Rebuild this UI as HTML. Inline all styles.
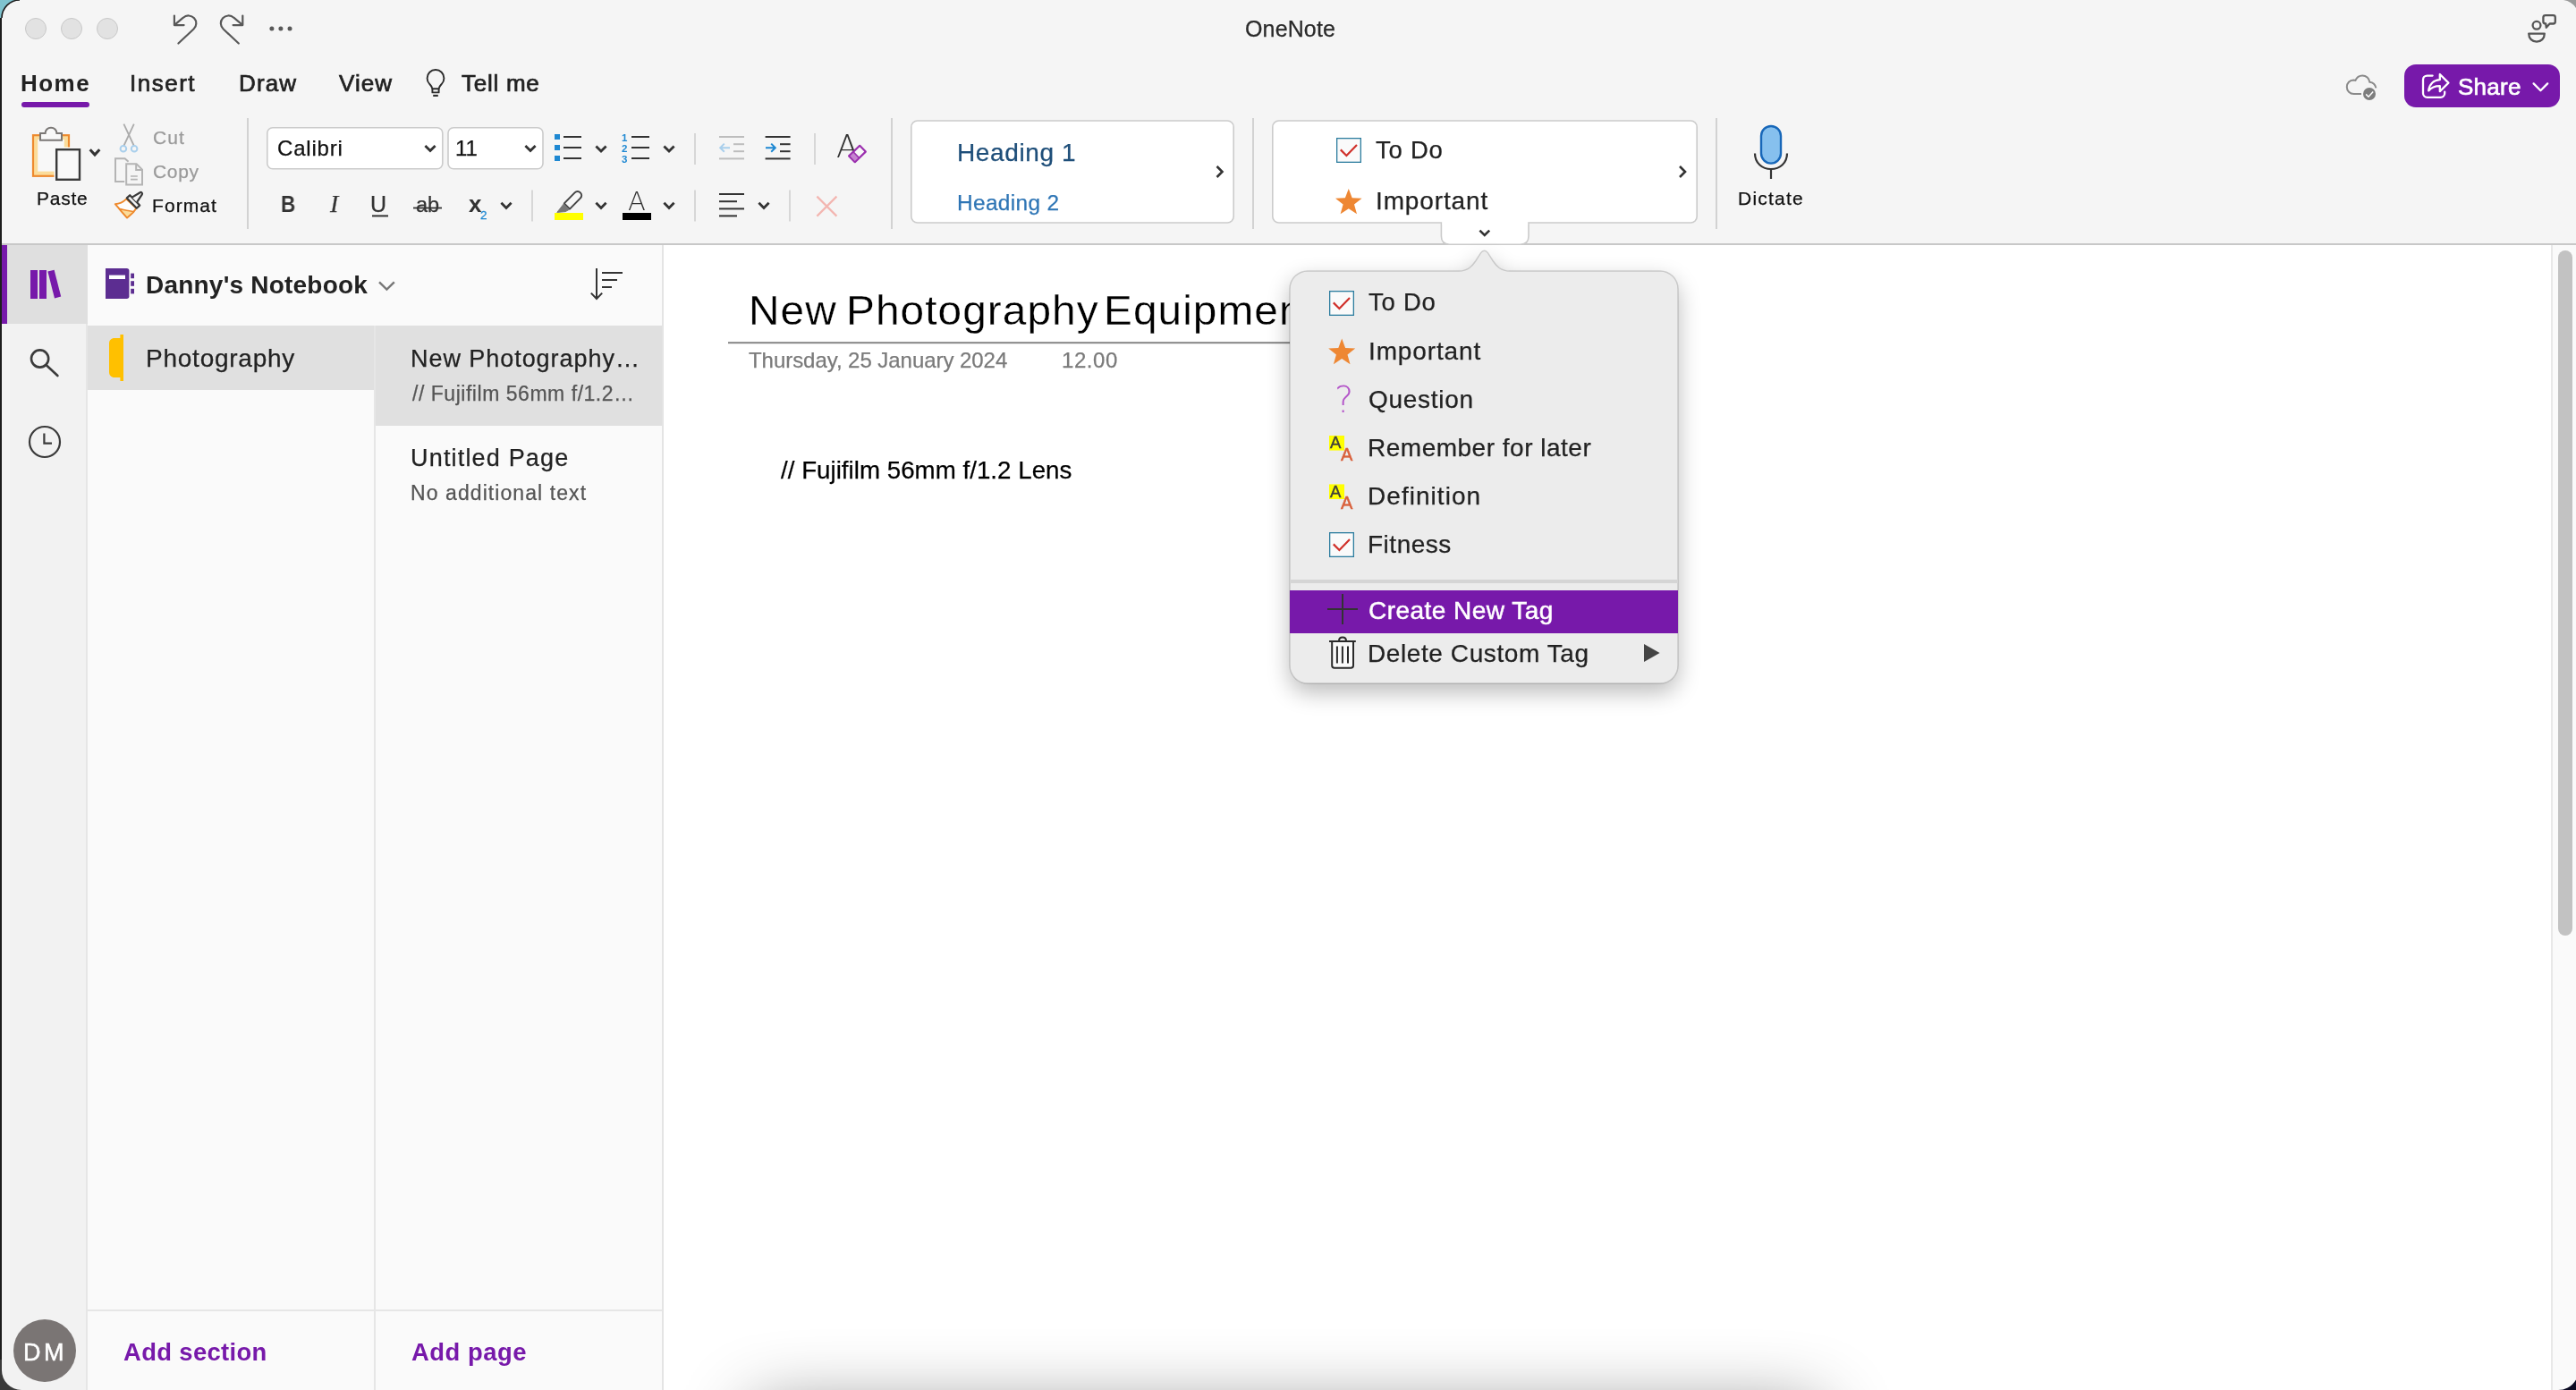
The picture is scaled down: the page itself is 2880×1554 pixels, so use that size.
<!DOCTYPE html>
<html lang="en"><head><meta charset="utf-8"><title>OneNote</title>
<style>
html,body{margin:0;padding:0;}
body{width:2880px;height:1554px;overflow:hidden;background:#f5f5f5;position:relative;font-family:"Liberation Sans",sans-serif;}
.t{position:absolute;line-height:0;white-space:nowrap;will-change:transform;}
.r{position:absolute;}
svg{position:absolute;left:0;top:0;overflow:visible;}
</style></head><body>
<div class="r" style="left:0px;top:272px;width:2880px;height:2px;background:#c8c8c8;"></div>
<div class="r" style="left:2px;top:274px;width:94px;height:1280px;background:#f2f2f2;"></div>
<div class="r" style="left:96px;top:274px;width:2px;height:1280px;background:#e6e6e6;"></div>
<div class="r" style="left:98px;top:274px;width:642px;height:1280px;background:#fafafa;"></div>
<div class="r" style="left:740px;top:274px;width:2px;height:1280px;background:#e4e4e4;"></div>
<div class="r" style="left:742px;top:274px;width:2138px;height:1280px;background:#ffffff;"></div>
<div class="r" style="left:2852px;top:274px;width:2px;height:1280px;background:#e8e8e8;"></div>
<div class="r" style="left:2854px;top:274px;width:26px;height:1280px;background:#fafafa;"></div>
<div class="r" style="left:2860px;top:280px;width:16px;height:766px;background:#c2c2c2;border-radius:8px;"></div>
<div class="r" style="left:742px;top:1254px;width:2109px;height:300px;overflow:hidden;"><div style="position:absolute;left:100px;top:320px;width:1193px;height:120px;box-shadow:0 0 80px 0 rgba(0,0,0,0.45);background:rgba(0,0,0,0.45);"></div></div>
<svg width="2880" height="1554" viewBox="0 0 2880 1554"><circle cx="40" cy="32" r="11.5" fill="#e2e2e2" stroke="#c8c8c8" stroke-width="1"/><circle cx="80" cy="32" r="11.5" fill="#e2e2e2" stroke="#c8c8c8" stroke-width="1"/><circle cx="120" cy="32" r="11.5" fill="#e2e2e2" stroke="#c8c8c8" stroke-width="1"/><g transform="translate(0,1.1)" fill="none" stroke="#585858" stroke-width="2.2" stroke-linecap="round" stroke-linejoin="round"><path d="M194.9 16.4V27H205.6"/><path d="M195.4 26.6L204.9 18.6A8.6 8.6 0 0 1 217.06 19.2A8.6 8.6 0 0 1 216.5 31.4L199.4 47.4"/><path d="M271.3 16.4V27H260.6"/><path d="M270.8 26.6L261.3 18.6A8.6 8.6 0 0 0 249.14 19.2A8.6 8.6 0 0 0 249.7 31.4L266.8 47.4"/></g><circle cx="303.9" cy="32" r="2.5" fill="#585858"/><circle cx="313.9" cy="32" r="2.5" fill="#585858"/><circle cx="324.0" cy="32" r="2.5" fill="#585858"/><g fill="none" stroke="#555" stroke-width="2.3" stroke-linejoin="round" stroke-linecap="round"><circle cx="2836" cy="28.3" r="4.4"/><path d="M2827.2 37.6H2844.8C2844.8 43 2841 46.6 2836 46.6C2831 46.6 2827.2 43 2827.2 37.6Z"/><path d="M2846 17.2H2854.5C2856 17.2 2856.8 18 2856.8 19.5V24.2C2856.8 25.7 2856 26.5 2854.5 26.5H2850.6L2846.8 30.8L2846.2 26.5C2844.4 26.5 2843.4 25.7 2843.4 24.2V19.5C2843.4 18 2844.4 17.2 2846 17.2Z"/></g><rect x="24" y="114" width="76" height="6" rx="3" fill="#7719aa"/><g fill="none" stroke="#2b2b2b" stroke-width="1.9" stroke-linejoin="round"><path d="M483.4 99.2C483.2 97 481.8 95.6 480.35 94.05A9.4 9.4 0 1 1 493.65 94.05C492.2 95.6 490.8 97 490.6 99.2Z"/><path d="M483.4 99.2V103.4H490.6V99.2"/><path d="M484.2 106.9H489.8" stroke-width="2.1"/></g><g><path d="M2640 105H2631.6C2627.2 105 2623.8 101.6 2623.8 97.2C2623.8 93 2627 89.6 2631.2 89.4L2633.4 89.8C2634.8 86.4 2637.8 84.4 2641.2 84.4C2645.4 84.4 2648.8 87.6 2649.4 91.8C2653 92.2 2655.6 94.8 2656.4 98.4" fill="none" stroke="#8a8a8a" stroke-width="2"/><circle cx="2649" cy="105" r="7" fill="#7d7d7d"/><path d="M2645.2 105.4L2648 108.2L2653.2 102.6" fill="none" stroke="#fff" stroke-width="1.5"/></g><rect x="2688" y="72" width="174" height="48" rx="13" fill="#7719aa"/><g fill="none" stroke="#fff" stroke-width="2.3" stroke-linejoin="round" stroke-linecap="round"><path d="M2719.6 84.6H2713.6C2711 84.6 2709 86.6 2709 89.2V104.2C2709 106.8 2711 108.8 2713.6 108.8H2728.6C2731.2 108.8 2733.2 106.8 2733.2 104.2V102.6"/><path d="M2727.8 83V89.2C2720.6 89.6 2716 94.2 2715.2 101.4C2718.2 97.8 2722.2 96.2 2727.8 96.2V102.2L2737.4 92.6Z"/><path d="M2832.6 93.4L2840.4 101.2L2848.2 93.4"/></g><g><rect x="37" y="151.2" width="40" height="45.6" fill="#fbdc9a" stroke="#ee8a2e" stroke-width="2.2"/><rect x="42.2" y="156" width="29.6" height="35.6" fill="#f8f8f8"/><path d="M45 156.8V149H50.6C50.6 145.4 53.4 142.8 57 142.8C60.6 142.8 63.4 145.4 63.4 149H69V156.8Z" fill="#f8f8f8" stroke="#7a7775" stroke-width="2"/><rect x="60.5" y="164.5" width="31" height="39" fill="#f5f5f5"/><rect x="63.2" y="167.2" width="25.8" height="33.6" fill="#f9f9f9" stroke="#3a3a3a" stroke-width="2.4"/></g><path d="M100.7 167.3L106.0 173.0L111.3 167.3" fill="none" stroke="#333" stroke-width="3.1" stroke-linejoin="miter"/><g fill="none"><path d="M138.4 138.6L149.8 163M149.8 138.6L138.4 163" stroke="#acacac" stroke-width="1.8"/><circle cx="137.9" cy="166.2" r="3.3" stroke="#a9cfec" stroke-width="2"/><circle cx="150.1" cy="166.2" r="3.3" stroke="#a9cfec" stroke-width="2"/></g><g fill="none" stroke="#b4b4b4" stroke-width="2"><path d="M139.2 203H129V177.2H139.6L143.6 180.8"/><path d="M141.2 183.2H152.6L159 189.6V206.6H141.2Z" fill="#f5f5f5"/><path d="M152.2 183.6V190H158.6"/><path d="M146 197H153.8M146 200.6H153.8" stroke-width="1.6"/></g><g stroke-linejoin="round"><path d="M141.4 222.4C137 226.6 133 228 128.8 228.2L142 243.4C146.4 240 150 236.6 152.4 232.8Z" fill="#fdfdfd" stroke="#ee8a2e" stroke-width="2"/><path d="M133.4 233.6C138.6 234.6 144 235.4 149.6 236.8L142 243.4Z" fill="#fbdc9a" stroke="#ee8a2e" stroke-width="1.6"/><path d="M141.8 221.4L145.2 218.2L156.2 229.6L152.8 232.8Z" fill="#f5f5f5" stroke="#3a3a3a" stroke-width="2.2"/><path d="M147.6 220.6L156.6 215.2C158 214.4 159.6 216 158.8 217.4L153 226.2" fill="#f5f5f5" stroke="#3a3a3a" stroke-width="2.2"/></g><rect x="276" y="132" width="2" height="124" fill="#d2d2d2"/><rect x="298.8" y="142.8" width="196" height="46" rx="6" fill="#fff" stroke="#cbcbcb" stroke-width="1.6"/><rect x="501" y="142.8" width="106" height="46" rx="6" fill="#fff" stroke="#cbcbcb" stroke-width="1.6"/><path d="M475.4 163.0L481.0 168.6L486.6 163.0" fill="none" stroke="#333" stroke-width="2.8" stroke-linejoin="miter"/><path d="M587.4 163.0L593.0 168.6L598.6 163.0" fill="none" stroke="#333" stroke-width="2.8" stroke-linejoin="miter"/><rect x="620" y="150" width="6" height="6" fill="#1e88d2"/><rect x="630" y="152" width="20" height="2" fill="#333"/><rect x="706" y="152" width="20" height="2" fill="#333"/><rect x="620" y="162" width="6" height="6" fill="#1e88d2"/><rect x="630" y="164" width="20" height="2" fill="#333"/><rect x="706" y="164" width="20" height="2" fill="#333"/><rect x="620" y="174" width="6" height="6" fill="#1e88d2"/><rect x="630" y="176" width="20" height="2" fill="#333"/><rect x="706" y="176" width="20" height="2" fill="#333"/><path d="M666.4 163.4L672.0 169.0L677.6 163.4" fill="none" stroke="#333" stroke-width="2.8" stroke-linejoin="miter"/><path d="M742.4 163.4L748.0 169.0L753.6 163.4" fill="none" stroke="#333" stroke-width="2.8" stroke-linejoin="miter"/><rect x="776.2" y="149" width="1.6" height="35" fill="#d0d0d0"/><g fill="#bdbdbd"><rect x="804" y="152" width="28" height="2"/><rect x="820" y="160.2" width="12" height="2"/><rect x="820" y="168.2" width="12" height="2"/><rect x="804" y="176.4" width="28" height="2"/></g><path d="M816 165.2H805.4M809.8 160.6L805.2 165.2L809.8 169.8" fill="none" stroke="#a9cfec" stroke-width="2"/><g fill="#333"><rect x="855.6" y="152" width="28" height="2"/><rect x="872" y="160.2" width="11.6" height="2"/><rect x="872" y="168.2" width="11.6" height="2"/><rect x="855.6" y="176.4" width="28" height="2"/></g><path d="M856 165.2H866.6M862.2 160.6L866.8 165.2L862.2 169.8" fill="none" stroke="#1e88d2" stroke-width="2"/><rect x="910.2" y="149" width="1.6" height="35" fill="#d0d0d0"/><rect x="996" y="132" width="2" height="124" fill="#d2d2d2"/><rect x="1018.8" y="135" width="360.4" height="114" rx="7" fill="#fff" stroke="#cbcbcb" stroke-width="1.6"/><path d="M1360.5 186.0L1366.5 192.0L1360.5 198.0" fill="none" stroke="#333" stroke-width="2.6"/><rect x="1400" y="132" width="2" height="124" fill="#d2d2d2"/><path d="M1611.4 248H1709V264C1709 270 1705.8 273.2 1699.8 273.2H1620.6C1614.6 273.2 1611.4 270 1611.4 264Z" fill="#fff" stroke="#cbcbcb" stroke-width="1.6"/><rect x="1422.8" y="135" width="474.4" height="114" rx="7" fill="#fff" stroke="#cbcbcb" stroke-width="1.6"/><rect x="1612.2" y="246" width="96" height="5" fill="#fff"/><path d="M1878.0 186.0L1884.0 192.0L1878.0 198.0" fill="none" stroke="#333" stroke-width="2.6"/><path d="M1654.4 257.6L1659.8 262.9L1665.2 257.6" fill="none" stroke="#333" stroke-width="2.6" stroke-linejoin="miter"/><rect x="1918" y="132" width="2" height="124" fill="#d2d2d2"/><rect x="1494.65" y="154.65" width="26.7" height="26.7" fill="#fafafa" stroke="#2b7c9e" stroke-width="1.3"/><path d="M1498.8 167.4L1505.4 174L1517 162" fill="none" stroke="#d0302a" stroke-width="2.2"/><polygon points="1507.8,211.0 1511.7,221.3 1522.6,221.8 1514.0,228.6 1517.0,239.2 1507.8,233.2 1498.6,239.2 1501.6,228.6 1493.0,221.8 1503.9,221.3" fill="#ee8733"/><rect x="620" y="238" width="32" height="8" fill="#ffff00"/><g stroke-linejoin="round"><path d="M630.8 227.4L642.6 215.4C644.4 213.6 647 213.6 648.8 215.4C650.6 217.2 650.6 219.8 648.8 221.6L637 233.6Z" fill="#f7f7f7" stroke="#444" stroke-width="2"/><path d="M630.2 228L636.4 234.2L632.2 236.6L622.8 237.4Z" fill="#777" stroke="#777" stroke-width="1"/></g><path d="M666.4 226.8L672.0 232.4L677.6 226.8" fill="none" stroke="#333" stroke-width="2.8" stroke-linejoin="miter"/><rect x="696" y="238" width="32" height="8" fill="#000"/><path d="M742.4 226.8L748.0 232.4L753.6 226.8" fill="none" stroke="#333" stroke-width="2.8" stroke-linejoin="miter"/><rect x="776.2" y="212.5" width="1.6" height="35" fill="#d0d0d0"/><g fill="#333"><rect x="804" y="216" width="28" height="2"/><rect x="804" y="224.2" width="20" height="2"/><rect x="804" y="232.4" width="28" height="2"/><rect x="804" y="240.4" width="20" height="2"/></g><path d="M848.4 226.8L854.0 232.4L859.6 226.8" fill="none" stroke="#333" stroke-width="2.8" stroke-linejoin="miter"/><rect x="882.2" y="212.5" width="1.6" height="35" fill="#d0d0d0"/><path d="M913.4 219.6L935.4 241.6M935.4 219.6L913.4 241.6" stroke="#f3b6b1" stroke-width="2.2" fill="none"/><rect x="594.2" y="212.5" width="1.6" height="35" fill="#d0d0d0"/><path d="M560.4 226.8L566.0 232.4L571.6 226.8" fill="none" stroke="#333" stroke-width="2.8" stroke-linejoin="miter"/><rect x="416" y="240.4" width="18" height="2" fill="#333"/><rect x="462" y="231.6" width="32" height="1.8" fill="#333"/><rect x="1969" y="141" width="22" height="41.6" rx="11" fill="#86c0ee" stroke="#1767b9" stroke-width="2.4"/><path d="M1962 171.4C1962 182 1970 189 1980 189C1990 189 1998 182 1998 171.4M1980 189V200" fill="none" stroke="#333" stroke-width="2.2"/></svg>
<div class="t " style="left:1391.62px;top:32.34px;font-size:25.00px;color:#2a2a2a;letter-spacing:0.139px;-webkit-text-stroke:0.25px #2a2a2a;">OneNote</div>
<div class="t " style="left:23.26px;top:92.99px;font-size:26.00px;color:#222;font-weight:700;letter-spacing:1.464px;">Home</div>
<div class="t " style="left:144.60px;top:92.99px;font-size:26.00px;color:#222;letter-spacing:1.513px;-webkit-text-stroke:0.7px #222;">Insert</div>
<div class="t " style="left:266.87px;top:92.99px;font-size:26.00px;color:#222;letter-spacing:1.133px;-webkit-text-stroke:0.7px #222;">Draw</div>
<div class="t " style="left:378.89px;top:92.99px;font-size:26.00px;color:#222;letter-spacing:1.055px;-webkit-text-stroke:0.7px #222;">View</div>
<div class="t " style="left:516.42px;top:92.99px;font-size:26.00px;color:#222;letter-spacing:0.731px;-webkit-text-stroke:0.7px #222;">Tell me</div>
<div class="t " style="left:2747.62px;top:96.99px;font-size:26.00px;color:#fff;letter-spacing:0.239px;-webkit-text-stroke:0.7px #fff;">Share</div>
<div class="t " style="left:41.28px;top:222.22px;font-size:21.00px;color:#111;letter-spacing:0.739px;-webkit-text-stroke:0.25px #111;">Paste</div>
<div class="t " style="left:170.93px;top:153.72px;font-size:21.00px;color:#9a9a9a;letter-spacing:1.020px;-webkit-text-stroke:0.25px #9a9a9a;">Cut</div>
<div class="t " style="left:170.93px;top:191.72px;font-size:21.00px;color:#9a9a9a;letter-spacing:0.694px;-webkit-text-stroke:0.25px #9a9a9a;">Copy</div>
<div class="t " style="left:170.28px;top:229.72px;font-size:21.00px;color:#111;letter-spacing:1.074px;-webkit-text-stroke:0.25px #111;">Format</div>
<div class="t " style="left:309.78px;top:165.68px;font-size:24.00px;color:#111;letter-spacing:0.803px;-webkit-text-stroke:0.25px #111;">Calibri</div>
<div class="t " style="left:509.17px;top:165.68px;font-size:24.00px;color:#111;-webkit-text-stroke:0.25px #111;">11</div>
<div class="t " style="left:314.09px;top:228.34px;font-size:25.00px;color:#333;font-weight:700;transform:scaleX(0.9000);transform-origin:0 50%;">B</div>
<div class="t " style="left:369.00px;top:227.55px;font-size:28.00px;color:#333;font-style:italic;-webkit-text-stroke:0.25px #333;font-family:'Liberation Serif',serif;">I</div>
<div class="t " style="left:414.07px;top:228.34px;font-size:25.00px;color:#333;-webkit-text-stroke:0.25px #333;">U</div>
<div class="t " style="left:464.50px;top:228.86px;font-size:23.50px;color:#333;-webkit-text-stroke:0.25px #333;">ab</div>
<div class="t " style="left:523.82px;top:227.99px;font-size:26.00px;color:#333;font-weight:700;">x</div>
<div class="t " style="left:536.72px;top:240.92px;font-size:13.50px;color:#1e88d2;-webkit-text-stroke:0.3px #1e88d2;">2</div>
<div class="t " style="left:695.00px;top:154.42px;font-size:11.50px;color:#1e88d2;font-weight:700;">1</div>
<div class="t " style="left:695.00px;top:166.42px;font-size:11.50px;color:#1e88d2;font-weight:700;">2</div>
<div class="t " style="left:695.00px;top:178.32px;font-size:11.50px;color:#1e88d2;font-weight:700;">3</div>
<div class="t " style="left:935.40px;top:163.66px;font-size:35.60px;color:#333;font-family:'DejaVu Sans',sans-serif;font-weight:200;">A</div>
<div class="t " style="left:702.20px;top:225.45px;font-size:29.00px;color:#333;font-family:'DejaVu Sans',sans-serif;font-weight:200;">A</div>
<div class="t " style="left:1069.70px;top:170.80px;font-size:28.00px;color:#1e4e79;letter-spacing:0.626px;-webkit-text-stroke:0.25px #1e4e79;">Heading 1</div>
<div class="t " style="left:1070.00px;top:226.55px;font-size:24.40px;color:#2e75b5;letter-spacing:0.373px;-webkit-text-stroke:0.25px #2e75b5;">Heading 2</div>
<div class="t " style="left:1538.38px;top:168.47px;font-size:27.50px;color:#222;letter-spacing:0.733px;-webkit-text-stroke:0.25px #222;">To Do</div>
<div class="t " style="left:1537.92px;top:225.30px;font-size:28.00px;color:#222;letter-spacing:0.877px;-webkit-text-stroke:0.25px #222;">Important</div>
<div class="t " style="left:1943.28px;top:222.22px;font-size:21.00px;color:#111;letter-spacing:1.216px;-webkit-text-stroke:0.25px #111;">Dictate</div>
<svg width="2880" height="1554" viewBox="0 0 2880 1554"><path d="M949.2 174.4L961.2 162.8L967.8 169.6L955.8 181.2Z" fill="#f8f8f8" stroke="#9b2fae" stroke-width="2.2" stroke-linejoin="round"/><path d="M949.2 174.4L954 169.8L960.6 176.6L955.8 181.2Z" fill="#c583d0" stroke="#9b2fae" stroke-width="1.6" stroke-linejoin="round"/></svg>
<div class="r" style="left:2px;top:274px;width:6px;height:88px;background:#7719aa;"></div>
<div class="r" style="left:8px;top:274px;width:90px;height:88px;background:#dfdfdf;"></div>
<div class="r" style="left:98px;top:364px;width:320px;height:72px;background:#e0e0e0;"></div>
<div class="r" style="left:418px;top:364px;width:2px;height:1190px;background:#e6e6e6;"></div>
<div class="r" style="left:420px;top:364px;width:320px;height:112px;background:#e0e0e0;"></div>
<div class="r" style="left:98px;top:1464px;width:642px;height:2px;background:#e6e6e6;"></div>
<svg width="2880" height="1554" viewBox="0 0 2880 1554"><g fill="#7719aa"><rect x="34" y="302" width="8" height="32"/><rect x="44" y="302" width="8" height="32"/><path d="M53.4 303.6L60.6 301.8L68.2 331.6L61 333.6Z"/></g><g fill="none" stroke="#3b3b3b" stroke-width="2.6" stroke-linecap="round"><circle cx="44.6" cy="401" r="9.6"/><path d="M51.8 408.2L64.4 420"/></g><g fill="none" stroke="#3b3b3b" stroke-width="2.2"><circle cx="50" cy="494" r="17"/><path d="M49.4 484.6V495.6H58"/></g><circle cx="50" cy="1510" r="35" fill="#7a7574"/><g fill="#5c2d91"><path d="M118 300H141.6C143.4 300 144.4 301 144.4 302.8V331.2C144.4 333 143.4 334 141.6 334H118Z"/><rect x="146.2" y="305.6" width="3.8" height="5.6"/><rect x="146.2" y="314.2" width="3.8" height="5.6"/><rect x="146.2" y="322.8" width="3.8" height="5.6"/></g><rect x="122" y="307.6" width="18" height="4.4" fill="#fff"/><path d="M424 315.4L432.4 323.6L440.8 315.4" fill="none" stroke="#777" stroke-width="2.4"/><g fill="none" stroke="#333" stroke-width="2"><path d="M667 300V334M660.8 327.6L667 334L673.2 327.6"/><path d="M673 305H696M673 313H690M673 321H684"/></g><path d="M138 374V426H134.4V422H128C124.4 422 122 419.6 122 416V384C122 380.4 124.4 378 128 378H134.4V374Z" fill="#ffc000"/><rect x="814" y="382.2" width="660" height="2" fill="#858585"/></svg>
<div class="t " style="left:26.39px;top:1511.64px;font-size:27.00px;color:#fff;letter-spacing:3.440px;-webkit-text-stroke:0.5px #fff;">DM</div>
<div class="t " style="left:163.13px;top:319.00px;font-size:28.00px;color:#222;font-weight:700;letter-spacing:0.211px;">Danny's Notebook</div>
<div class="t " style="left:162.70px;top:401.30px;font-size:28.00px;color:#222;letter-spacing:0.757px;-webkit-text-stroke:0.25px #222;">Photography</div>
<div class="t " style="left:458.79px;top:400.64px;font-size:27.00px;color:#222;letter-spacing:0.950px;-webkit-text-stroke:0.25px #222;">New Photography…</div>
<div class="t " style="left:461.00px;top:440.03px;font-size:23.00px;color:#555;letter-spacing:0.531px;-webkit-text-stroke:0.25px #555;">// Fujifilm 56mm f/1.2…</div>
<div class="t " style="left:458.92px;top:511.84px;font-size:27.00px;color:#222;letter-spacing:1.181px;-webkit-text-stroke:0.25px #222;">Untitled Page</div>
<div class="t " style="left:459.11px;top:551.03px;font-size:23.00px;color:#555;letter-spacing:1.078px;-webkit-text-stroke:0.25px #555;">No additional text</div>
<div class="t " style="left:138.32px;top:1511.51px;font-size:27.40px;color:#7719aa;font-weight:700;letter-spacing:0.358px;">Add section</div>
<div class="t " style="left:459.82px;top:1511.51px;font-size:27.40px;color:#7719aa;font-weight:700;letter-spacing:0.542px;">Add page</div>
<div class="t " style="left:837.08px;top:347.90px;font-size:45.60px;color:#000;letter-spacing:1.020px;-webkit-text-stroke:0.3px #fff;transform:scaleX(1.0476);transform-origin:0 50%;">New </div>
<div class="t " style="left:946.08px;top:347.90px;font-size:45.60px;color:#000;letter-spacing:1.020px;-webkit-text-stroke:0.3px #fff;transform:scaleX(1.0476);transform-origin:0 50%;">Photography </div>
<div class="t " style="left:1233.58px;top:347.90px;font-size:45.60px;color:#000;letter-spacing:1.020px;-webkit-text-stroke:0.3px #fff;transform:scaleX(1.0476);transform-origin:0 50%;">Equipment</div>
<div class="t " style="left:837.46px;top:402.68px;font-size:24.00px;color:#7a7a7a;letter-spacing:-0.048px;-webkit-text-stroke:0.25px #7a7a7a;">Thursday, 25 January 2024</div>
<div class="t " style="left:1186.87px;top:402.68px;font-size:24.00px;color:#7a7a7a;letter-spacing:0.552px;-webkit-text-stroke:0.25px #7a7a7a;">12.00</div>
<div class="t " style="left:872.50px;top:526.40px;font-size:27.70px;color:#000;letter-spacing:0.026px;-webkit-text-stroke:0.25px #000;">// Fujifilm 56mm f/1.2 Lens</div>
<svg width="2880" height="1554" viewBox="0 0 2880 1554"><defs><filter id="psh" x="-30%" y="-30%" width="160%" height="170%"><feGaussianBlur in="SourceAlpha" stdDeviation="13"/><feOffset dx="0" dy="10" result="b"/><feComponentTransfer><feFuncA type="linear" slope="0.27"/></feComponentTransfer><feMerge><feMergeNode/><feMergeNode in="SourceGraphic"/></feMerge></filter><clipPath id="pclip"><rect x="1442" y="303" width="434" height="461" rx="20"/></clipPath></defs><path d="M1462 303H1631C1641 303 1645.6 298 1649.6 292L1655.6 282.6C1657.8 279.4 1661.2 279.4 1663.4 282.6L1669.4 292C1673.4 298 1678 303 1688 303H1856A20 20 0 0 1 1876 323V744A20 20 0 0 1 1856 764H1462A20 20 0 0 1 1442 744V323A20 20 0 0 1 1462 303Z" fill="#ececec" stroke="rgba(0,0,0,0.16)" stroke-width="1.4" filter="url(#psh)"/><g clip-path="url(#pclip)"><rect x="1442" y="648" width="434" height="4" fill="#d5d5d5"/><rect x="1442" y="660" width="434" height="48" fill="#7719aa"/></g><rect x="1486.65" y="325.65" width="26.7" height="26.7" fill="#fafafa" stroke="#2b7c9e" stroke-width="1.3"/><path d="M1490.8 338.4L1497.4 345L1509 333" fill="none" stroke="#d0302a" stroke-width="2.2"/><rect x="1486.65" y="595.65" width="26.7" height="26.7" fill="#fafafa" stroke="#2b7c9e" stroke-width="1.3"/><path d="M1490.8 608.4L1497.4 615L1509 603" fill="none" stroke="#d0302a" stroke-width="2.2"/><polygon points="1500.2,378.6 1504.1,389.0 1515.2,389.5 1506.5,396.5 1509.5,407.2 1500.2,401.0 1490.9,407.2 1493.9,396.5 1485.2,389.5 1496.3,389.0" fill="#ee8733"/><rect x="1486" y="487" width="17" height="16.6" fill="#ffff00"/><rect x="1486" y="541.4" width="17" height="16.6" fill="#ffff00"/><path d="M1484 681H1518M1501 664V698" stroke="#333" stroke-width="2" fill="none"/><g fill="none" stroke="#2a2a2a" stroke-width="2" stroke-linejoin="round"><path d="M1489.2 717.4V744C1489.2 745.8 1490.4 746.8 1492 746.8H1510.2C1511.8 746.8 1513 745.8 1513 744V717.4" fill="#fafafa"/><path d="M1486 717H1515.8"/><path d="M1497 716.6C1497 714 1498.6 712.6 1501 712.6C1503.4 712.6 1505 714 1505 716.6"/><path d="M1494.9 722.4V741.4M1500.9 722.4V741.4M1507 722.4V741.4"/></g><polygon points="1838,720 1855.6,730 1838,740" fill="#444"/></svg>
<div class="t " style="left:1530.38px;top:338.47px;font-size:27.50px;color:#222;letter-spacing:0.733px;-webkit-text-stroke:0.25px #222;">To Do</div>
<div class="t " style="left:1529.92px;top:392.90px;font-size:28.00px;color:#222;letter-spacing:0.877px;-webkit-text-stroke:0.25px #222;">Important</div>
<div class="t " style="left:1529.67px;top:446.80px;font-size:28.00px;color:#222;letter-spacing:0.725px;-webkit-text-stroke:0.25px #222;">Question</div>
<div class="t " style="left:1528.70px;top:500.70px;font-size:28.00px;color:#222;letter-spacing:0.504px;-webkit-text-stroke:0.25px #222;">Remember for later</div>
<div class="t " style="left:1528.70px;top:555.30px;font-size:28.00px;color:#222;letter-spacing:1.043px;-webkit-text-stroke:0.25px #222;">Definition</div>
<div class="t " style="left:1528.70px;top:609.30px;font-size:28.00px;color:#222;letter-spacing:0.510px;-webkit-text-stroke:0.25px #222;">Fitness</div>
<div class="t " style="left:1529.58px;top:683.10px;font-size:28.00px;color:#fff;letter-spacing:0.460px;-webkit-text-stroke:0.5px #fff;">Create New Tag</div>
<div class="t " style="left:1528.70px;top:731.10px;font-size:28.00px;color:#222;letter-spacing:0.594px;-webkit-text-stroke:0.25px #222;">Delete Custom Tag</div>
<div class="t " style="left:1491.50px;top:447.14px;font-size:40.00px;color:#b455c9;font-family:'DejaVu Sans',sans-serif;font-weight:200;">?</div>
<div class="t " style="left:1487.16px;top:495.19px;font-size:18.50px;color:#3d3d3d;-webkit-text-stroke:0.4px #3d3d3d;">A</div>
<div class="t " style="left:1499.36px;top:507.87px;font-size:20.00px;color:#d9603b;-webkit-text-stroke:0.5px #d9603b;">A</div>
<div class="t " style="left:1487.16px;top:549.59px;font-size:18.50px;color:#3d3d3d;-webkit-text-stroke:0.4px #3d3d3d;">A</div>
<div class="t " style="left:1499.36px;top:562.27px;font-size:20.00px;color:#d9603b;-webkit-text-stroke:0.5px #d9603b;">A</div>
<svg width="2880" height="1554" viewBox="0 0 2880 1554">
<rect x="0" y="0" width="2" height="1554" fill="#1d1d1d"/>
<path d="M0 0H22A20 20 0 0 0 2 20H0Z" fill="#7fc3cf"/>
<path d="M22 0A20 20 0 0 0 2 20" fill="none" stroke="#1d1d1d" stroke-width="1.6"/>
<path d="M0 1554V1520H2V1532A22 22 0 0 0 24 1554Z" fill="#3a3a3a"/>
<path d="M2866 0A20 20 0 0 1 2880 9V0Z" fill="#9a9a9a"/>
<path d="M2858 1554A23 23 0 0 0 2880 1542.5V1554Z" fill="#0a0a22"/>
</svg>
</body></html>
